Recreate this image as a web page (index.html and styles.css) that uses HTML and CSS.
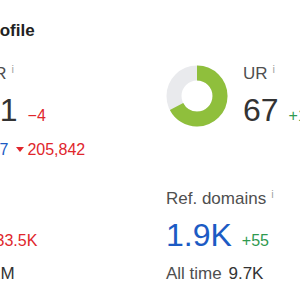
FILE: index.html
```html
<!DOCTYPE html>
<html lang="en">
<head>
    <meta charset="UTF-8">
    <meta name="viewport" content="width=device-width, initial-scale=1.0">
    <title>Site Explorer - Overview</title>
    <link rel="stylesheet" href="styles.css">
</head>

<body>
<div class="overview">
    <h2 class="section-title">Backlink profile</h2>

    <div class="metrics">
        <div class="metric">
            <div class="metric-top">
                <svg class="donut" viewBox="0 0 62 62" width="62" height="62">
                    <circle cx="31" cy="31" r="23" fill="none" stroke="#e9eaed" stroke-width="15"/>
                    <circle cx="31" cy="31" r="23" fill="none" stroke="#8fbf3c" stroke-width="15"
                            stroke-dasharray="30.3 144.5" transform="rotate(-90 31 31)"/>
                </svg>
                <div class="metric-text">
                    <div class="metric-label">DR<span class="info">i</span></div>
                    <div class="metric-value">
                        <span class="value">21</span>
                        <span class="delta down">&minus;4</span>
                    </div>
                </div>
            </div>
            <div class="metric-sub">
                <span class="sub-label">AR</span>
                <a class="rank" href="#">1,234,567</a>
                <span class="delta down"><span class="arrow-down"></span>205,842</span>
            </div>
        </div>

        <div class="metric">
            <div class="metric-top">
                <svg class="donut" viewBox="0 0 62 62" width="62" height="62">
                    <circle cx="31" cy="31" r="23" fill="none" stroke="#e9eaed" stroke-width="15"/>
                    <circle cx="31" cy="31" r="23" fill="none" stroke="#8fbf3c" stroke-width="15"
                            stroke-dasharray="96.8 144.5" transform="rotate(-90 31 31)"/>
                </svg>
                <div class="metric-text">
                    <div class="metric-label">UR<span class="info">i</span></div>
                    <div class="metric-value">
                        <span class="value">67</span>
                        <span class="delta up">+1</span>
                    </div>
                </div>
            </div>
        </div>

        <div class="metric">
            <div class="metric-label">Backlinks<span class="info">i</span></div>
            <div class="metric-value">
                <a class="value link" href="#">2.3M</a>
                <span class="delta down">&minus;33.5K</span>
            </div>
            <div class="metric-total">All time <span class="total">12.1M</span></div>
        </div>

        <div class="metric">
            <div class="metric-label">Ref. domains<span class="info">i</span></div>
            <div class="metric-value">
                <a class="value link" href="#">1.9K</a>
                <span class="delta up">+55</span>
            </div>
            <div class="metric-total">All time <span class="total">9.7K</span></div>
        </div>
    </div>
</div>
</body>
</html>
```

FILE: styles.css
```css
* {
    margin: 0;
    padding: 0;
    box-sizing: border-box;
    font-family: 'Liberation Sans', Arial, sans-serif;
}

body {
    background-color: #fff;
    overflow: hidden;
}

.overview {
    margin-left: -95px;
    padding-top: 21px;
    width: 420px;
}

.section-title {
    margin-left: 3px;
    font-size: 17px;
    line-height: 20px;
    font-weight: bold;
    color: #222;
}

.metrics {
    display: grid;
    grid-template-columns: 261px 261px;
    row-gap: 28px;
    margin-top: 23px;
}

.metric-top {
    display: flex;
    align-items: flex-start;
}

.donut {
    flex-shrink: 0;
    margin-top: 1px;
    margin-right: 15px;
}

.metric-label {
    font-size: 17px;
    line-height: 20px;
    color: #4f4f4f;
    white-space: nowrap;
}

.info {
    display: inline-block;
    vertical-align: top;
    margin-left: 5px;
    font-size: 11px;
    line-height: 11px;
    color: #a3a3a3;
}

.metric-value {
    display: flex;
    align-items: baseline;
    margin-top: 6px;
    white-space: nowrap;
}

.value {
    font-size: 32px;
    line-height: 40px;
    color: #333;
    text-decoration: none;
}

.value.link {
    color: #1c5bc4;
}

.delta {
    margin-left: 10px;
    font-size: 16px;
    line-height: 22px;
}

.delta.down {
    color: #e0262c;
}

.delta.up {
    color: #2f9a50;
}

.metric-sub {
    display: flex;
    align-items: baseline;
    margin-top: 9px;
    font-size: 16px;
    line-height: 22px;
    white-space: nowrap;
}

.sub-label {
    color: #4f4f4f;
}

.rank {
    margin-left: 10px;
    color: #1c5bc4;
    text-decoration: none;
}

.metric-sub .delta {
    margin-left: 8px;
}

.arrow-down {
    display: inline-block;
    width: 0;
    height: 0;
    margin-right: 3px;
    border-left: 4.5px solid transparent;
    border-right: 4.5px solid transparent;
    border-top: 5px solid #e0262c;
    vertical-align: 3px;
}

.metric-total {
    margin-top: 8px;
    font-size: 17px;
    line-height: 22px;
    color: #4f4f4f;
    white-space: nowrap;
}

.total {
    margin-left: 2px;
    color: #333;
}
```
